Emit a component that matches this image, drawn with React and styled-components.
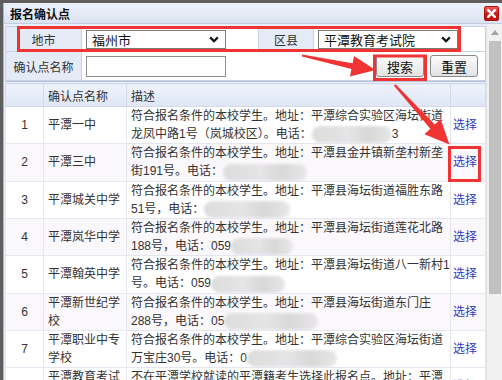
import React from "react";
import styled, { createGlobalStyle } from "styled-components";

const GlobalStyle = createGlobalStyle`
  html, body {
    margin: 0;
    padding: 0;
  }
  body {
    width: 502px;
    height: 380px;
    overflow: hidden;
    background: #5e5e5e;
    font-family: "Liberation Sans", "Noto Sans CJK SC", sans-serif;
    font-size: 12px;
    color: #333;
  }
`;

const rows = [
  { name: "平潭一中", addr: "平潭综合实验区海坛街道", pre: "龙凤中路1号（岚城校区）。电话：", blur: 80, post: "3" },
  { name: "平潭三中", addr: "平潭县金井镇新垄村新垄", pre: "街191号。电话：", blur: 84 },
  { name: "平潭城关中学", addr: "平潭县海坛街道福胜东路", pre: "51号，电话：", blur: 86 },
  { name: "平潭岚华中学", addr: "平潭县海坛街道莲花北路", pre: "188号，电话：059", blur: 62 },
  { name: "平潭翰英中学", addr: "平潭县海坛街道八一新村1", pre: "号。电话：059", blur: 74 },
  { name: "平潭新世纪学校", addr: "平潭县海坛街道东门庄", pre: "288号，电话：05", blur: 94 },
  { name: "平潭职业中专学校", addr: "平潭综合实验区海坛街道", pre: "万宝庄30号。电话：0", blur: 90 },
];

export default function App() {
  return (
    <>
      <GlobalStyle />
      <Screen>
        <Dialog>
          <TitleBar>
            <Title>报名确认点</Title>
            <CloseButton>
              <svg width="9" height="9" viewBox="0 0 9 9">
                <path d="M1.2 1.2 L7.8 7.8 M7.8 1.2 L1.2 7.8" stroke="#fff" strokeWidth="2.4" strokeLinecap="square" />
              </svg>
            </CloseButton>
          </TitleBar>
          <Body>
            <Content>
              <FilterForm>
                <LabelCell>地市</LabelCell>
                <ValueCell>
                  <SelectBox>
                    <span>福州市</span>
                    <Chevron />
                  </SelectBox>
                </ValueCell>
                <LabelCell>区县</LabelCell>
                <ValueCell>
                  <SelectBox>
                    <span>平潭教育考试院</span>
                    <Chevron />
                  </SelectBox>
                </ValueCell>
                <LabelCell>确认点名称</LabelCell>
                <ValueCell $wide>
                  <TextInput />
                  <Actions>
                    <Button>搜索</Button>
                    <Button>重置</Button>
                  </Actions>
                </ValueCell>
              </FilterForm>

              <ListTable>
                <colgroup>
                  <col style={{ width: 38 }} />
                  <col style={{ width: 83 }} />
                  <col style={{ width: 324 }} />
                  <col style={{ width: 35 }} />
                </colgroup>
                <thead>
                  <tr>
                    <HeadCell />
                    <HeadCell>确认点名称</HeadCell>
                    <HeadCell>描述</HeadCell>
                    <HeadCell />
                  </tr>
                </thead>
                <tbody>
                  {rows.map((r, i) => (
                    <Row key={r.name} $alt={i % 2 === 1}>
                      <IndexCell>{i + 1}</IndexCell>
                      <NameCell>{r.name}</NameCell>
                      <DescCell>
                        <Line>符合报名条件的本校学生。地址：{r.addr}</Line>
                        <Line>
                          {r.pre}
                          <Blur $w={r.blur} />
                          {r.post}
                        </Line>
                      </DescCell>
                      <PickCell>
                        <PickLink>选择</PickLink>
                      </PickCell>
                    </Row>
                  ))}
                  <Row>
                    <IndexCell>8</IndexCell>
                    <NameCell>平潭教育考试院</NameCell>
                    <DescCell>
                      <Line>不在平潭学校就读的平潭籍考生选择此报名点。地址：平潭</Line>
                      <Line>综合实验区海坛街道</Line>
                    </DescCell>
                    <PickCell>
                      <PickLink>选择</PickLink>
                    </PickCell>
                  </Row>
                </tbody>
              </ListTable>
            </Content>
            <Scrollbar>
              <ScrollArrow>
                <svg width="8" height="5" viewBox="0 0 8 5">
                  <path d="M0 5 L4 0 L8 5 Z" fill="#a3a3a3" />
                </svg>
              </ScrollArrow>
              <ScrollThumb />
            </Scrollbar>
          </Body>
        </Dialog>

        <Annotations width="502" height="380" viewBox="0 0 502 380">
          <rect x="18.5" y="27.5" width="441" height="23" fill="none" stroke="#f03434" strokeWidth="3" />
          <rect x="374.5" y="56" width="51" height="23.5" fill="none" stroke="#f03434" strokeWidth="3" />
          <rect x="449.5" y="147.5" width="30" height="33" fill="none" stroke="#f03434" strokeWidth="3" />
          <polygon
            points="302,54.5 352.6,63.2 354,56 375.5,70 350,76.5 351.4,69 302,56.5"
            fill="#f03434"
          />
          <polygon
            points="393.8,85.6 430.3,128.7 424.5,134.3 449.5,144.5 440.6,119 434.7,124.5 395.6,84.2"
            fill="#f03434"
          />
        </Annotations>
      </Screen>
    </>
  );
}

function Chevron() {
  return (
    <ChevronIcon width="10" height="7" viewBox="0 0 10 7">
      <path d="M1.2 1.4 L5 5.2 L8.8 1.4" fill="none" stroke="#111" strokeWidth="2.3" />
    </ChevronIcon>
  );
}

const Screen = styled.div`
  position: relative;
  width: 502px;
  height: 380px;
  padding: 3px 0 0 3px;
  box-sizing: border-box;
  overflow: hidden;
`;

const Dialog = styled.div`
  height: 100%;
  display: flex;
  flex-direction: column;
  background: #e9eef8;
  border-left: 1px solid #a9b4c8;
`;

const TitleBar = styled.div`
  flex: none;
  height: 20px;
  display: flex;
  align-items: center;
  justify-content: space-between;
  padding: 0 3px 0 6px;
  background: linear-gradient(#edf1fa, #dbe3f3);
  border-bottom: 1px solid #c3cee3;
`;

const Title = styled.div`
  font-weight: bold;
  font-size: 12px;
  color: #111;
`;

const CloseButton = styled.div`
  width: 15px;
  height: 15px;
  box-sizing: border-box;
  display: flex;
  align-items: center;
  justify-content: center;
  border: 1px solid #a81010;
  border-radius: 2px;
  background: linear-gradient(#f06060, #d01818 55%, #c01010);
`;

const Body = styled.div`
  flex: 1;
  min-height: 0;
  display: flex;
`;

const Content = styled.div`
  flex: 1;
  min-width: 0;
  overflow: hidden;
  padding: 2px 0 0 1px;
`;

const FilterForm = styled.div`
  display: grid;
  grid-template-columns: 76px 177px 55px 1fr;
  grid-template-rows: 25px 29px;
  border-top: 1px solid #c6d2e6;
  border-left: 1px solid #c6d2e6;
  border-bottom: 1px solid #b5c4dc;
  background: #fff;
`;

const LabelCell = styled.div`
  display: flex;
  align-items: center;
  justify-content: center;
  background: #e4eaf6;
  border-right: 1px solid #c6d2e6;
  border-bottom: 1px solid #c6d2e6;
  font-size: 12px;
  color: #333;
`;

const ValueCell = styled.div`
  display: flex;
  align-items: center;
  padding: 0 7px 0 4px;
  border-right: 1px solid #c6d2e6;
  border-bottom: 1px solid #c6d2e6;
  grid-column: ${(p) => (p.$wide ? "2 / -1" : "auto")};
`;

const SelectBox = styled.div`
  width: 140px;
  height: 19px;
  box-sizing: border-box;
  display: flex;
  align-items: center;
  justify-content: space-between;
  padding: 0 6px 0 5px;
  border: 1px solid #7a7a7a;
  background: #fff;
  font-size: 13px;
  color: #111;
`;

const ChevronIcon = styled.svg`
  flex: none;
`;

const TextInput = styled.div`
  width: 140px;
  height: 21px;
  box-sizing: border-box;
  border: 1px solid #8f8f8f;
  background: #fff;
`;

const Actions = styled.div`
  margin-left: auto;
  display: flex;
  gap: 6px;
`;

const Button = styled.div`
  width: 48px;
  height: 22px;
  box-sizing: border-box;
  display: flex;
  align-items: center;
  justify-content: center;
  border: 1px solid #8a8a8a;
  border-radius: 3px;
  background: linear-gradient(#fbfbfb, #e3e3e3);
  font-size: 13px;
  color: #111;
`;

const ListTable = styled.table`
  width: 480px;
  table-layout: fixed;
  border-collapse: collapse;
  margin-top: 1px;
  background: #fff;
`;

const HeadCell = styled.th`
  height: 22px;
  padding: 0 4px;
  text-align: left;
  font-weight: normal;
  font-size: 12px;
  color: #333;
  background: linear-gradient(#eef2fb, #dfe6f5);
  border: 1px solid #d3dbeb;
`;

const Row = styled.tr`
  background: ${(p) => (p.$alt ? "#fbf8fc" : "#fff")};
`;

const Cell = styled.td`
  height: 36px;
  padding: 0 4px;
  border: 1px solid #e5e6ef;
  line-height: 18px;
  vertical-align: middle;
  font-size: 12px;
  color: #333;
`;

const IndexCell = styled(Cell)`
  text-align: center;
  padding: 0;
`;

const NameCell = styled(Cell)`
  word-break: break-all;
`;

const DescCell = styled(Cell)`
  padding: 0 0 0 4px;
`;

const Line = styled.div`
  white-space: nowrap;
  overflow: hidden;
`;

const Blur = styled.span`
  display: inline-block;
  width: ${(p) => p.$w}px;
  height: 17px;
  vertical-align: middle;
  border-radius: 9px;
  background: linear-gradient(90deg, #dcdcdc, #e6e4e6 45%, #d8d8d8 70%, #e8e6e8);
  filter: blur(1.5px);
`;

const PickCell = styled(Cell)`
  padding: 0 0 0 2px;
`;

const PickLink = styled.span`
  color: #2c3cc0;
`;

const Scrollbar = styled.div`
  flex: none;
  width: 16px;
  display: flex;
  flex-direction: column;
  background: #f1f1f1;
  border-left: 1px solid #e4e4e4;
  box-sizing: border-box;
`;

const ScrollArrow = styled.div`
  height: 17px;
  display: flex;
  align-items: center;
  justify-content: center;
`;

const ScrollThumb = styled.div`
  height: 253px;
  margin: 0 1px 0 2px;
  background: #c1c1c1;
`;

const Annotations = styled.svg`
  position: absolute;
  top: 0;
  left: 0;
  pointer-events: none;
`;
